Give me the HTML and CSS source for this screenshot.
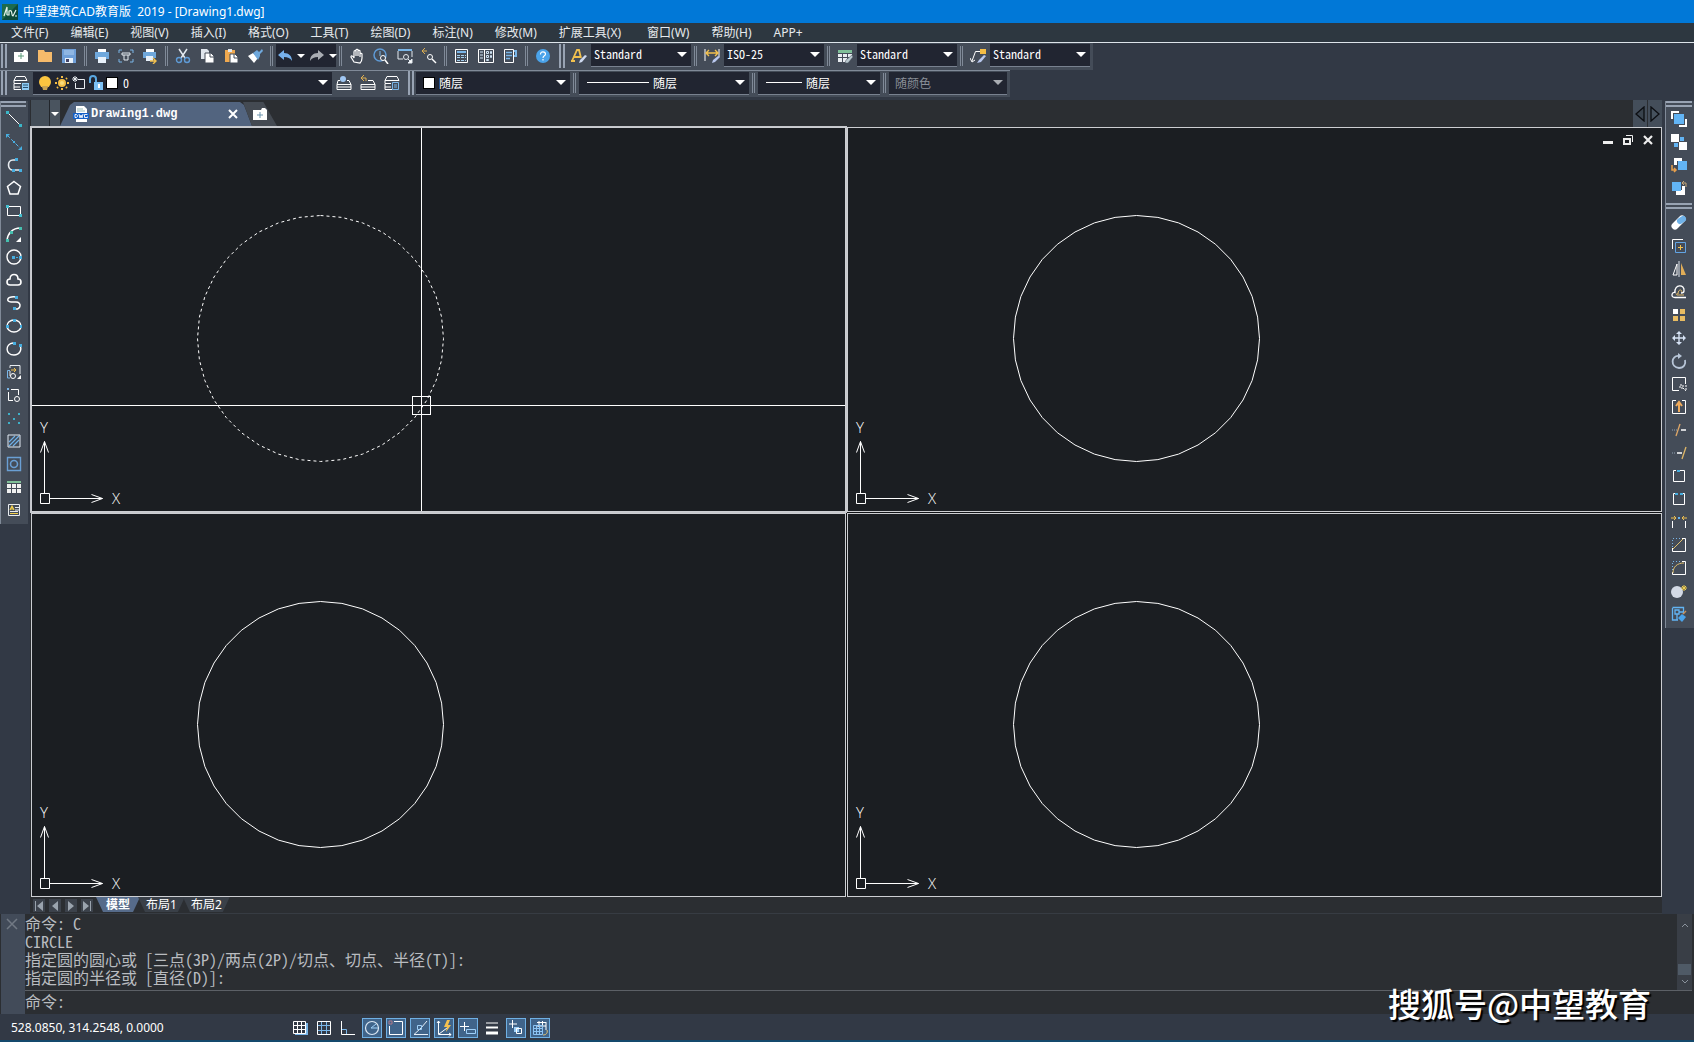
FILE: index.html
```html
<!DOCTYPE html>
<html lang="zh-CN">
<head>
<meta charset="utf-8">
<title>中望建筑CAD教育版 2019 - [Drawing1.dwg]</title>
<link rel="stylesheet" href="styles.css">
</head>
<body>
<header class="titlebar">
  <svg class="logo" viewBox="0 0 16 16"><rect width="16" height="16" fill="#0d4a3a"/><path d="M0 0h16L0 16z" fill="#1d6b4c"/><path d="M2 12 5 3v8M5 11h2V7c4-2 2 5 4 5l3-6M13 12h2" fill="none" stroke="#e8f4ee" stroke-width="1.200"/></svg>
  <h1>中望建筑CAD教育版&nbsp; 2019 - [Drawing1.dwg]</h1>
</header>
<nav class="menu">
  <button>文件(F)</button><button>编辑(E)</button><button>视图(V)</button><button>插入(I)</button><button>格式(O)</button><button>工具(T)</button><button>绘图(D)</button><button>标注(N)</button><button>修改(M)</button><button class="wide">扩展工具(X)</button><button>窗口(W)</button><button>帮助(H)</button><button>APP+</button>
</nav>

<div class="toolrow">
  <div class="bar">
    <i class="grip"></i>
    <button class="tb" aria-label="新建"><svg viewBox="0 0 16 16"><path d="M1 4h9l1-2h2l2 2v10H1z" fill="#fff"/><path d="M8 5v6M5 8h6" stroke="#5a9a78"/></svg></button>
    <button class="tb" aria-label="打开"><svg viewBox="0 0 16 16"><path d="M1 2h6l1 2h7v10H1z" fill="#f6bb6b"/></svg></button>
    <button class="tb" aria-label="保存"><svg viewBox="0 0 16 16"><path d="M1 1h14v14H1z" fill="#6f9fd8"/><path d="M3 2h10v5H3z" fill="#8fb6e2"/><path d="M4 10h8v5H4z" fill="#e8f1fa"/><path d="M5 11h3v3H5z" fill="#446"/></svg></button>
    <i class="sep"></i>
    <button class="tb" aria-label="打印"><svg viewBox="0 0 16 16"><path d="M4 1h8v3H4z" fill="#fff"/><path d="M1 4h14v7H1z" fill="#6fa8dc"/><path d="M4 9h8v6H4z" fill="#e8f1fa"/></svg></button>
    <button class="tb" aria-label="打印预览"><svg viewBox="0 0 16 16" fill="none" stroke="#7ab6e8"><path d="M1 5V2h3M12 2h3v3M1 11v3h3M12 14h3v-3"/><path d="M4 5h8v2H4zM6 7v5h4V7" stroke="#e4eaf0"/></svg></button>
    <button class="tb" aria-label="发布"><svg viewBox="0 0 16 16"><path d="M4 1h8v3H4z" fill="#fff"/><path d="M1 4h13v6H1z" fill="#6fa8dc"/><path d="M4 8h7v5H4z" fill="#e8f1fa"/><path d="M8 13h6m-3-3 3 3-3 3" stroke="#f2c14e" stroke-width="1.4" fill="none"/></svg></button>
    <i class="sep"></i>
    <button class="tb" aria-label="剪切"><svg viewBox="0 0 16 16" fill="none"><path d="m4 1 6 9M12 1 6 10" stroke="#e4eaf0" stroke-width="1.5"/><circle cx="4" cy="12" r="2.5" stroke="#5f9bd6" stroke-width="1.4"/><circle cx="12" cy="12" r="2.5" stroke="#5f9bd6" stroke-width="1.4"/></svg></button>
    <button class="tb" aria-label="复制"><svg viewBox="0 0 16 16"><path d="M2 1h6l2 2v8H2z" fill="#dfe5ec"/><path d="M6 5h6l3 3v7H6z" fill="#fff" stroke="#444c59"/><path d="M11 5v4h4" fill="none" stroke="#444c59"/></svg></button>
    <button class="tb" aria-label="粘贴"><svg viewBox="0 0 16 16"><path d="M2 2h10v12H2z" fill="#f0a94f"/><path d="M5 1h4v3H5z" fill="#dfe5ec"/><path d="M7 6h5l3 3v6H7z" fill="#fff" stroke="#444c59"/><path d="M11 6v4h4" fill="none" stroke="#444c59"/></svg></button>
    <button class="tb" aria-label="特性匹配"><svg viewBox="0 0 16 16"><path d="m1 8 5-3 5 5-4 5z" fill="#fff"/><path d="m6 5 4-3 2 2 3-3 1 2-3 3v2l-2 4z" fill="#6fa8dc"/></svg></button>
    <i class="sep"></i>
    <span class="undo">
      <button aria-label="放弃"><svg viewBox="0 0 16 16"><path d="m1 7 6-5v3c5 0 8 3 8 8-2-3-4-4-8-4v3z" fill="#76b0ec"/></svg></button><b class="tri"></b>
      <button aria-label="重做"><svg viewBox="0 0 16 16"><path d="M15 7 9 2v3c-5 0-8 3-8 8 2-3 4-4 8-4v3z" fill="#a9adb3"/></svg></button><b class="tri"></b>
    </span>
    <i class="sep"></i>
    <button class="tb" aria-label="平移"><svg viewBox="0 0 16 16" fill="none" stroke="#fff" stroke-width="1.2"><path d="M5 14 2 9c0-2 2-1 3 1V4c0-2 2-2 2 0v4-6c0-1 2-1 2 0v6-5c0-1 2-1 2 0v6-3c0-1 2-1 2 0v4c0 3-1 4-2 5z"/></svg></button>
    <button class="tb" aria-label="实时缩放"><svg viewBox="0 0 16 16" fill="none"><circle cx="7" cy="7" r="6" stroke="#5f9bd6" stroke-width="1.5"/><path d="M7 3v5" stroke="#7ab6e8"/><circle cx="10" cy="10" r="2.5" stroke="#fff" fill="#444c59"/><path d="m12 12 3 4" stroke="#fff" stroke-width="1.5"/></svg></button>
    <button class="tb" aria-label="窗口缩放"><svg viewBox="0 0 16 16" fill="none" stroke="#e4eaf0"><path d="M1 2h14" stroke="#7ab6e8" stroke-width="2"/><path d="M1 3v8h5M15 3v6"/><circle cx="9" cy="9" r="2.5"/><path d="m11 11 2 2"/><path d="M15 11v4h-4z" fill="#fff"/></svg></button>
    <button class="tb" aria-label="上一个缩放"><svg viewBox="0 0 16 16" fill="none"><path d="M6 3H1m3-3L1 3l3 3" stroke="#e0b050"/><circle cx="9" cy="9" r="2.500" stroke="#fff"/><path d="m11 11 4 4" stroke="#fff" stroke-width="1.4"/></svg></button>
    <i class="sep"></i>
    <button class="tb" aria-label="特性"><svg viewBox="0 0 16 16" fill="none"><path d="M1.500 1.500h12v13h-12z" stroke="#fff"/><path d="M3 4h9" stroke="#7ab6e8" stroke-width="2"/><path d="M3 7.500h9M3 9.500h9M3 12.500h9" stroke="#a6d0ee" stroke-dasharray="3 1"/></svg></button>
    <button class="tb" aria-label="设计中心"><svg viewBox="0 0 16 16" fill="none" stroke="#fff"><path d="M.500 1.500h15v13H.500zM6.500 1v14"/><path d="M2 4h3M2 7h3M2 10h3M8.500 3.500h2v2h-2zM12.500 3.500h1v2h-1zM8.500 7.500h2v2h-2zM12.500 7.500h1v2h-1zM8.500 11.500h2v1h-2z" stroke="#cfe2f2"/></svg></button>
    <button class="tb" aria-label="工具选项板"><svg viewBox="0 0 16 16" fill="none"><path d="M2.500 1.500h9v13h-9z" stroke="#fff"/><path d="M12 3h2v5h-2" stroke="#7ab6e8" stroke-width="2"/><path d="M4 4.500h6M4 7.500h6M4 10.500h4" stroke="#7ab6e8" stroke-width="1.500"/></svg></button>
    <i class="sep"></i>
    <button class="tb" aria-label="帮助"><svg viewBox="0 0 16 16"><circle cx="8" cy="8" r="7" fill="#4aa3ea"/><path d="M5.500 6.500c0-4 5-3 5-.5 0 2-2.500 1.500-2.500 4M8 11v1.500" fill="none" stroke="#fff" stroke-width="1.200"/></svg></button>
  </div>
  <div class="bar styles">
    <i class="grip"></i>
    <button class="tb" aria-label="文字样式"><svg viewBox="0 0 16 16" fill="none"><path d="m1 13 5-11h2l2 8M3 9h6M0 13h4" stroke="#f2c14e" stroke-width="1.8"/><path d="m8 15 1-3 5-5 2 1-5 6z" fill="#cdd8ee"/></svg></button>
    <span class="combo"><select aria-label="文字样式"><option>Standard</option></select></span>
    <i class="sep"></i>
    <button class="tb" aria-label="标注样式"><svg viewBox="0 0 16 16" fill="none"><path d="M1 1v12M15 1v8" stroke="#fff"/><path d="M2 5h12M5 2 2 5l3 3M11 2l3 3-3 3" stroke="#f2c14e" stroke-width="1.400"/><path d="m8 15 1-3 5-4 2 1-5 5z" fill="#b9c8ee"/></svg></button>
    <span class="combo"><select aria-label="标注样式"><option>ISO-25</option></select></span>
    <i class="sep"></i>
    <button class="tb" aria-label="表格样式"><svg viewBox="0 0 16 16"><path d="M1 2h14v3H1z" fill="#7fbf98"/><path d="M1 6h4v3H1zM6 6h4v3H6zM11 6h4v3h-4zM1 10h4v4H1zM6 10h4v4H6z" fill="#e8ecf0"/><path d="m8 15 1-3 6-5 1 2-5 6z" fill="#b9c8ce" stroke="#444c59" stroke-width=".5"/></svg></button>
    <span class="combo"><select aria-label="表格样式"><option>Standard</option></select></span>
    <i class="sep"></i>
    <button class="tb" aria-label="多重引线样式"><svg viewBox="0 0 16 16" fill="none"><path d="M10 3.500H5.500L2 13M0 10l2 4 3-2" stroke="#fff"/><path d="M10 1h6v5h-6z" fill="#f4bd45"/><path d="m7 15 2-3 5-5 2 1-5 6z" fill="#b9c8ee"/></svg></button>
    <span class="combo"><select aria-label="多重引线样式"><option>Standard</option></select></span>
  </div>
</div>

<div class="toolrow second">
  <div class="bar">
    <i class="grip"></i>
    <button class="tb" aria-label="图层特性"><svg viewBox="0 0 16 16" fill="none" stroke="#fff"><path d="M3 1.500h9l2 4H1zM1 5.500v3h7M1 9v3h6M1 12v2.500h7"/><path d="M9 8h7v7H9z" fill="#8ecbf4" stroke="none"/><path d="M10 10h5M10 12.500h5" stroke="#28506e"/></svg></button>
    <span class="combo layer">
      <svg viewBox="0 0 16 16"><circle cx="8" cy="7" r="6" fill="#fbc540"/><path d="M5 11h6l-1 4H6z" fill="#c9a452"/></svg>
      <svg viewBox="0 0 16 16" fill="none" stroke="#f4bd45" stroke-width="2"><circle cx="8" cy="8" r="3" fill="#f9dc7c"/><path d="M8 1v2M8 13v2M1 8h2M13 8h2M3 3l1 1M12 12l1 1M13 3l-1 1M4 12l-1 1"/></svg>
      <svg viewBox="0 0 16 16" fill="none" stroke="#e8ecf0"><path d="M7 4.500h6.500v9h-9V8M4 1v6M1 4h6M2 2l4 4M6 2 2 6"/></svg>
      <svg viewBox="0 0 16 16"><path d="M2 8V4c0-4 6-4 6 0v4" fill="none" stroke="#5aa7e0" stroke-width="2"/><path d="M6 7h9v8H6z" fill="#7cc0f4"/><path d="M10 9h2v4h-2z" fill="#fff"/></svg>
      <i class="swatch"></i>
      <select aria-label="图层"><option>0</option></select>
    </span>
    <button class="tb" aria-label="将对象的图层置为当前"><svg viewBox="0 0 16 16" fill="none" stroke="#fff"><path d="M4 5.500H2l-1 4v5h14v-5l-2-4h-2M1 9.500h14M1 12h14"/><circle cx="7" cy="4" r="3" fill="#9fc6f2" stroke="none"/></svg></button>
    <button class="tb" aria-label="上一个图层"><svg viewBox="0 0 16 16" fill="none" stroke="#fff"><path d="M8 5.500h5l2 4v5H1v-5M1 9.500h14M1 12h14"/><path d="M6 6V3H1m3-3L1 3l3 3" stroke="#e0b050"/></svg></button>
    <button class="tb" aria-label="图层状态"><svg viewBox="0 0 16 16" fill="none" stroke="#fff"><path d="M3 1.500h10l2 4H1zM1 5.500v3h6M1 9v3h6M1 12v2.500h7"/><path d="M8.500 7.500h6v7h-6zM10 10h3M10 12h3" stroke="#7ab6e8"/></svg></button>
  </div>
  <div class="bar props">
    <i class="grip"></i>
    <span class="combo color"><i class="swatch"></i><select aria-label="颜色"><option>随层</option></select></span>
    <i class="sep"></i>
    <span class="combo ltype"><i class="line"></i><select aria-label="线型"><option>随层</option></select></span>
    <i class="sep"></i>
    <span class="combo lweight"><i class="line"></i><select aria-label="线宽"><option>随层</option></select></span>
    <i class="sep"></i>
    <span class="combo plot"><select aria-label="打印样式" disabled><option>随颜色</option></select></span>
  </div>
</div>

<main>
  <aside class="side left">
    <div class="vbar">
      <i class="hgrip"></i>
      <button aria-label="直线"><svg viewBox="0 0 16 16"><path d="m2 2 12 12" stroke="#fff"/><path d="M0 0h3v3H0zM13 13h3v3h-3z" fill="#3bb6c8"/></svg></button>
      <button aria-label="构造线"><svg viewBox="0 0 16 16"><path d="m1 1 14 14" stroke="#58b4e8" stroke-dasharray="4 2"/><path d="M0 0h4L0 4zM16 16h-4l4-4zM7 7h2v2H7z" fill="#46aee0"/></svg></button>
      <button aria-label="多段线"><svg viewBox="0 0 16 16"><path d="M10 3H7c-6 0-6 10 0 10h7" fill="none" stroke="#e8ecf0" stroke-width="1.600"/><path d="M9 1h3v3H9zM6 12h3v3H6zM13 12h3v3h-3z" fill="#46aee0"/></svg></button>
      <button aria-label="正多边形"><svg viewBox="0 0 16 16"><path d="m8 1.500 6.500 5L12 14H4L1.500 6.500z" fill="none" stroke="#fff" stroke-width="1.500"/></svg></button>
      <button aria-label="矩形"><svg viewBox="0 0 16 16"><path d="M1.500 3.500h13v9h-13z" fill="none" stroke="#fff"/><path d="M0 2h3v3H0zM13 11h3v3h-3z" fill="#46c0d0"/></svg></button>
      <button aria-label="圆弧"><svg viewBox="0 0 16 16"><path d="M1 14C2 7 7 2 14 2" fill="none" stroke="#fff" stroke-width="1.500"/><path d="M0 13h3v3H0zM4 5h3v3H4zM13 1h3v3h-3z" fill="#46c0b0"/><path d="M15 11v5h-5z" fill="#fff"/></svg></button>
      <button aria-label="圆"><svg viewBox="0 0 16 16"><circle cx="8" cy="8" r="7" fill="none" stroke="#fff" stroke-width="1.400"/><path d="M6 7h3v3H6zM10 8h2v1h-2zM13 7h3v3h-3z" fill="#46aee0"/></svg></button>
      <button aria-label="修订云线"><svg viewBox="0 0 16 16"><path d="M4 13c-4 0-4-6 0-6 0-6 8-6 8 0 4 0 4 6 0 6z" fill="none" stroke="#fff" stroke-width="1.600"/></svg></button>
      <button aria-label="样条曲线"><svg viewBox="0 0 16 16"><path d="M10 2C0 1 0 7 5 7h5c6 0 5 8-1 7" fill="none" stroke="#fff" stroke-width="1.500"/><path d="M9 1h3v3H9zM7 12h3v3H7z" fill="#46aee0"/></svg></button>
      <button aria-label="椭圆"><svg viewBox="0 0 16 16"><ellipse cx="8" cy="8" rx="7" ry="6" fill="none" stroke="#fff" stroke-width="1.400"/><path d="M0 7h3v3H0zM7 1h3v3H7zM14 7h2v3h-2z" fill="#46aee0"/></svg></button>
      <button aria-label="椭圆弧"><svg viewBox="0 0 16 16"><path d="M7 2C-1 3-1 14 8 14c6 0 8-6 6-9" fill="none" stroke="#fff" stroke-width="1.400"/><path d="M7 1h3v3H7zM13 3h3v3h-3z" fill="#46aee0"/></svg></button>
      <button aria-label="插入块"><svg viewBox="0 0 16 16" fill="none"><path d="M4 4V1.500h10V10M4 7v5" stroke="#e8ecf0"/><path d="M4 6.500H1.500V14H4" stroke="#7ab6e8"/><path d="M5 6h5M8 4l2 2-2 2" stroke="#f2c14e"/><circle cx="7" cy="12" r="2.500" stroke="#fff"/><path d="M15 11v4h-4z" fill="#fff"/></svg></button>
      <button aria-label="创建块"><svg viewBox="0 0 16 16" fill="none"><path d="M5 2.500h7.500V8M2.500 5v8.500H7" stroke="#fff"/><path d="M1 1h2v2H1z" fill="#7ab6e8"/><circle cx="11" cy="12" r="2.500" stroke="#fff"/></svg></button>
      <button aria-label="点"><svg viewBox="0 0 16 16"><path d="M2 3h2v2H2zM12 3h2v2h-2zM7 8h2v2H7zM2 12h2v2H2zM12 12h2v2h-2z" fill="#3fb0c8"/></svg></button>
      <button aria-label="图案填充"><svg viewBox="0 0 16 16" fill="none"><path d="m3 9 6-6M3 13 13 3M7 13l6-6" stroke="#6fb0e8" stroke-width="1.200"/><path d="M2 2h12v12H2z" stroke="#dfe8f2"/></svg></button>
      <button aria-label="面域"><svg viewBox="0 0 16 16" fill="none" stroke="#6a9fd4"><path d="M1.500 1.500h13v13h-13z" stroke-width="1.400"/><circle cx="8" cy="8" r="3.500" stroke-width="1.600"/></svg></button>
      <button aria-label="表格"><svg viewBox="0 0 16 16"><path d="M1 2h14v2H1z" fill="#7fbf98"/><path d="M1 5h4v4H1zM6 5h4v4H6zM11 5h4v4h-4zM1 10h4v4H1zM6 10h4v4H6zM11 10h4v4h-4z" fill="#f0f0f0"/></svg></button>
      <button aria-label="多行文字"><svg viewBox="0 0 16 16" fill="none"><path d="M2.500 2.500h11v11h-11z" stroke="#e8ecf0"/><path d="m4 8 2-4 2 4M5 7h3M4 11.500h8" stroke="#f2d04e" stroke-width="1.200"/><path d="M9 5.500h4M9 8h4M4 9.500h8" stroke="#e8ecf0"/></svg></button>
    </div>
  </aside>

  <section class="workspace">
    <div class="filetabs">
      <span class="stub"></span><button class="tablist" aria-label="文件列表"><b class="tri"></b></button>
      <div class="filetab">
        <svg viewBox="0 0 16 16"><path d="M3 0h8l3 3v6H3z" fill="#fff"/><path d="M4 3h6M4 5h8" stroke="#9bb"/><path d="M0 7h16v6H0z" fill="#1461c8"/><path d="M2 8.500v3h1c2 0 2-3 0-3zM6 8l1 4 1-3 1 3 1-4M14.500 8.500h-3v3h3v-1" fill="none" stroke="#fff" stroke-width=".9"/><path d="M3 13h11v3H3z" fill="#fff"/></svg>
        <span>Drawing1.dwg</span><button aria-label="关闭"><svg viewBox="0 0 16 16"><path d="m4 4 8 8M12 4l-8 8" stroke="#fff" stroke-width="2"/></svg></button>
      </div>
      <button class="newtab" aria-label="新建图形"><svg viewBox="0 0 16 16"><path d="M1 4h8l1-2h3l2 2v10H1z" fill="#fff"/><path d="M8 6v6M5 9h6" stroke="#6a93ad"/></svg></button>
      <div class="scrolltabs"><button aria-label="向左"><svg viewBox="0 0 14 16"><path d="M11 1v14L3 8z" fill="#39434d" stroke="#0c0e12" stroke-width="1.300"/></svg></button><button aria-label="向右"><svg viewBox="0 0 14 16"><path d="M3 1v14l8-7z" fill="#46525e" stroke="#0c0e12" stroke-width="1.300"/></svg></button></div>
    </div>

    <svg class="defs" width="0" height="0"><defs>
      <polygon id="round" points="288.500,87.500 309.900,89.400 330.600,94.900 350,104 367.600,116.300 382.700,131.400 395,149 404.100,168.400 409.600,189.100 411.500,210.500 409.600,231.900 404.100,252.600 395,272 382.700,289.600 367.600,304.700 350,317 330.600,326.100 309.900,331.600 288.500,333.500 267.100,331.600 246.400,326.100 227,317 209.400,304.700 194.300,289.600 182,272 172.900,252.600 167.400,231.900 165.500,210.500 167.400,189.100 172.900,168.400 182,149 194.300,131.400 209.400,116.300 227,104 246.400,94.900 267.100,89.400"/>
      <g id="ucs"><path d="M8.500 12.500h9v10h-9zM12.500 12.500v-52M8.500-28.500l4-11 4 11M17.500 17.500h53M59.500 13.500l11 4-11 4"/><text x="8" y="-48">Y</text><text x="80" y="23">X</text></g>
    </defs></svg>
    <div class="canvas">
      <div class="view active">
        <svg class="draw"><use href="#round" stroke-dasharray="3 3"/><path class="crisp" d="M389.500 0v2000M0 277.500h4000M380.500 268.500h18v18h-18z"/></svg>
        <svg class="axes" viewBox="0 -64 100 94"><use href="#ucs"/></svg>
      </div>
      <div class="view">
        <svg class="draw"><use href="#round"/></svg>
        <svg class="axes" viewBox="0 -64 100 94"><use href="#ucs"/></svg>
        <div class="wincontrols">
          <button aria-label="最小化"><svg viewBox="0 0 12 12"><path d="M1 8.500h10" stroke="#eee" stroke-width="3"/></svg></button>
          <button aria-label="还原"><svg viewBox="0 0 12 12" fill="none" stroke="#eee"><path d="M2 5h6v5H2z" stroke-width="2"/><path d="M4 1.500h6.500V8"/></svg></button>
          <button aria-label="关闭"><svg viewBox="0 0 12 12"><path d="m2 2 8 8M10 2l-8 8" stroke="#eee" stroke-width="2.200"/></svg></button>
        </div>
      </div>
      <div class="view">
        <svg class="draw"><use href="#round"/></svg>
        <svg class="axes" viewBox="0 -64 100 94"><use href="#ucs"/></svg>
      </div>
      <div class="view">
        <svg class="draw"><use href="#round"/></svg>
        <svg class="axes" viewBox="0 -64 100 94"><use href="#ucs"/></svg>
      </div>
    </div>

    <div class="layouts">
      <div class="nav">
        <button aria-label="第一个"><svg viewBox="0 0 12 12"><path d="M2 1h1v10H2zM10 1v10L4 6z" fill="#9aa3ad"/></svg></button>
        <button aria-label="上一个"><svg viewBox="0 0 12 12"><path d="M9 1v10L3 6z" fill="#9aa3ad"/></svg></button>
        <button aria-label="下一个"><svg viewBox="0 0 12 12"><path d="M3 1v10l6-5z" fill="#9aa3ad"/></svg></button>
        <button aria-label="最后一个"><svg viewBox="0 0 12 12"><path d="M9 1h1v10H9zM2 1v10l6-5z" fill="#9aa3ad"/></svg></button>
      </div>
      <button class="ltab on">模型</button><button class="ltab">布局1</button><button class="ltab">布局2</button>
    </div>
  </section>

  <aside class="side right">
    <div class="vbar">
      <i class="hgrip"></i>
      <button aria-label="前置"><svg viewBox="0 0 16 16"><path d="M1 8V1h7M15 8v7H8" fill="none" stroke="#fff" stroke-width="2"/><path d="M3 3h10v10H3z" fill="#62b4f4"/></svg></button>
      <button aria-label="后置"><svg viewBox="0 0 16 16"><path d="M0 0h8v8H0zM8 8h8v8H8z" fill="#fff"/><path d="M9 3h4v4H9zM3 9h4v4H3z" fill="#62b4f4"/></svg></button>
      <button aria-label="置于对象之上"><svg viewBox="0 0 16 16"><path d="M3 1h8v3H6v4H3z" fill="#fff"/><path d="M7 4h9v9H7z" fill="#62b4f4"/><path d="M1 8v5h4M3 11l2 2-2 2" fill="none" stroke="#e8a04c" stroke-width="1.500"/></svg></button>
      <button aria-label="置于对象之下"><svg viewBox="0 0 16 16"><path d="M5 10h6V6h3v9H5z" fill="#fff"/><path d="M1 2h9v9H1z" fill="#62b4f4"/><path d="M15 7V3h-4M13 1l-2 2 2 2" fill="none" stroke="#c8a878"/></svg></button>
      <i class="hgrip gap"></i>
      <button aria-label="删除"><svg viewBox="0 0 16 16"><path d="m4 11 7-7" stroke="#fff" stroke-width="7" stroke-linecap="round"/><path d="m9 6 3-2" stroke="#6fb2e8" stroke-width="6" stroke-linecap="round"/></svg></button>
      <button aria-label="复制对象"><svg viewBox="0 0 16 16" fill="none"><path d="M1.500 11V1.500H12" stroke="#fff"/><path d="M4.500 4.500h10v10h-10z" stroke="#62a4e4"/><path d="M9.500 7v5M7 9.500h5" stroke="#f2c14e"/></svg></button>
      <button aria-label="镜像"><svg viewBox="0 0 16 16"><path d="M6 3v11H2z" fill="none" stroke="#fff"/><path d="M8 0v16" stroke="#dfe5ec"/><path d="M10 2v12h5z" fill="#e0ad58"/></svg></button>
      <button aria-label="偏移"><svg viewBox="0 0 16 16" fill="none"><path d="M15 13.500H4c-5 0-3-6 0-5C3 0 14 0 13 7c0 2-2 2-3 2" stroke="#fff" stroke-width="1.300"/><path d="M13 11H6c-1 0-1-2 1-1 0-5 4-5 4-2" stroke="#e0b96a"/></svg></button>
      <button aria-label="阵列"><svg viewBox="0 0 16 16"><path d="M2 2h5v5H2z" fill="#fff"/><path d="M9 2h5v5H9zM2 9h5v5H2zM9 9h5v5H9z" fill="#e8bc62"/></svg></button>
      <button aria-label="移动"><svg viewBox="0 0 16 16"><path d="M8 2v12M2 8h12" stroke="#d5e2f4" stroke-width="1.400"/><path d="m8 1 3 3H5zM8 15l3-3H5zM1 8l3-3v6zM15 8l-3-3v6z" fill="#d5e2f4"/></svg></button>
      <button aria-label="旋转"><svg viewBox="0 0 16 16"><path d="M8 3C0 2-1 14 8 15c5 0 7-4 6-8" fill="none" stroke="#b8c6d8" stroke-width="1.800"/><path d="M7 0v6l4-3z" fill="#b8c6d8"/></svg></button>
      <button aria-label="缩放"><svg viewBox="0 0 16 16" fill="none" stroke="#fff"><path d="M8 14.500H1.500v-13h13V8"/><path d="M9 9h3v3H9zM12 12l3 3M15 9v6" stroke-dasharray="2 1"/></svg></button>
      <button aria-label="拉伸"><svg viewBox="0 0 16 16" fill="none"><path d="M5 1.500H1.500v13h13v-13H11" stroke="#fff"/><path d="M8 3v10M5 7l3-4 3 4" stroke="#f0ab5c" stroke-width="2"/></svg></button>
      <button aria-label="修剪"><svg viewBox="0 0 16 16"><path d="M10 8h5" stroke="#fff" stroke-width="1.500"/><path d="M1 8h5" stroke="#8fa0b0" stroke-dasharray="1 1"/><path d="M9 2 5 14" stroke="#e0a868" stroke-width="1.300"/></svg></button>
      <button aria-label="延伸"><svg viewBox="0 0 16 16"><path d="M6 8h5" stroke="#fff" stroke-width="1.500"/><path d="M1 8h4" stroke="#8fa0b0" stroke-dasharray="1 1"/><path d="m15 2-4 12" stroke="#e0b868" stroke-width="1.300"/></svg></button>
      <button aria-label="打断于点"><svg viewBox="0 0 16 16" fill="none"><path d="M5 2.500H2.500v11h11v-11H9" stroke="#fff"/><path d="M6 2h3v2H6z" fill="#46aee0"/></svg></button>
      <button aria-label="打断"><svg viewBox="0 0 16 16" fill="none"><path d="M4 2.500H2.500v11h11v-11H12" stroke="#fff"/><path d="M4 2h3v2H4zM9 2h3v2H9z" fill="#46aee0"/></svg></button>
      <button aria-label="合并"><svg viewBox="0 0 16 16" fill="none"><path d="M1.500 14V7M14.500 14V7" stroke="#fff"/><path d="M0 4h5M3 2l2 2-2 2M16 4h-5M13 2l-2 2 2 2" stroke="#f2c14e"/><path d="M7 3h2v2H7z" fill="#62b4f4"/></svg></button>
      <button aria-label="倒角"><svg viewBox="0 0 16 16" fill="none"><path d="M11 1.500h3.500v13h-13V11" stroke="#fff"/><path d="M1.500 10V1.500H10" stroke="#7ab6e8" stroke-dasharray="1 2"/><path d="M2 12 12 2" stroke="#e0c070"/></svg></button>
      <button aria-label="圆角"><svg viewBox="0 0 16 16" fill="none"><path d="M11 1.500h3.500v13h-13V12" stroke="#fff"/><path d="M1.500 10V1.500H10" stroke="#7ab6e8" stroke-dasharray="1 2"/><path d="M2 13C2 7 6 3 13 3" stroke="#e0c070"/></svg></button>
      <button aria-label="分解"><svg viewBox="0 0 16 16"><circle cx="6" cy="9" r="6" fill="#d3dae6"/><path d="M13 2v6M10 5h6M11 3l4 4M15 3l-4 4" stroke="#f2d04e"/></svg></button>
      <button aria-label="块编辑"><svg viewBox="0 0 16 16" fill="none" stroke="#62b4f4"><path d="M1.500 1.500h11V8M1.500 2v12H7M4 4h4v4H4zM6 8v6M8 6h5" stroke-width="1.300"/><path d="m7 12 4-4 4 3-4 5z" fill="#4aa3ea" stroke="none"/><path d="m12 8 3-3" stroke="#c89058" stroke-width="1.500"/></svg></button>
    </div>
  </aside>
</main>

<section class="command">
  <div class="cmdgrip"><button aria-label="关闭命令行"><svg viewBox="0 0 12 12"><path d="m1 1 10 10M11 1 1 11" stroke="#717984" stroke-width="1.500"/></svg></button></div>
  <div class="cmdbody">
    <div class="history">
      <div class="log"><p>命令: C</p><p>CIRCLE</p><p>指定圆的圆心或 [三点(3P)/两点(2P)/切点、切点、半径(T)]:</p><p>指定圆的半径或 [直径(D)]:</p></div>
      <div class="scroll"><svg viewBox="0 0 12 8"><path d="m3 6 3-3 3 3" fill="none" stroke="#8a929c"/></svg><i></i><svg viewBox="0 0 12 8"><path d="m3 2 3 3 3-3" fill="none" stroke="#8a929c"/></svg></div>
    </div>
    <div class="prompt"><label for="cmd">命令:</label><input id="cmd" type="text"></div>
  </div>
  <p class="mark">搜狐号@中望教育</p>
</section>

<footer class="status">
  <span class="coords">528.0850, 314.2548, 0.0000</span>
  <button aria-label="捕捉"><svg viewBox="0 0 20 20"><path d="M5 16h12V5" fill="none" stroke="#7ab6e8" stroke-width="2"/><path d="M3.500 3.500h12v12h-12zM7.500 3v13M11.500 3v13M3 7.500h13M3 11.500h13" fill="none" stroke="#fff"/></svg></button>
  <button aria-label="栅格"><svg viewBox="0 0 20 20"><path d="M3.500 3.500h13v13h-13z" fill="none" stroke="#fff"/><path d="M7.500 4v12M12.500 4v12M4 7.500h12M4 12.500h12" stroke="#7ab6e8"/></svg></button>
  <button aria-label="正交"><svg viewBox="0 0 20 20" fill="none"><path d="M4 11.500h4.500V16" stroke="#7ab6e8"/><path d="M3.500 3v13.500H17" stroke="#fff"/></svg></button>
  <button class="on" aria-label="极轴"><svg viewBox="0 0 20 20" fill="none"><circle cx="10" cy="10" r="6.500" stroke="#dce8f4" stroke-width="1.200"/><path d="M9 10h7M9 10l5-4" stroke="#9fd0f8"/></svg></button>
  <button class="on" aria-label="对象捕捉"><svg viewBox="0 0 20 20" fill="none"><path d="M8 3.500h8.500v13h-13V8" stroke="#fff"/><path d="M3 3h3v3H3z" stroke="#b07888"/></svg></button>
  <button class="on" aria-label="对象追踪"><svg viewBox="0 0 20 20" fill="none"><path d="m17 3-6 7-7 6.500h14" stroke="#e8f0f8"/><path d="M7.500 7.500h4v4h-4z" stroke="#9fd0f8"/></svg></button>
  <button class="on" aria-label="动态UCS"><svg viewBox="0 0 20 20" fill="none"><path d="M4.500 3v13.500H17M5 16l8-6M3 5l1.500-2L6 5M15 15l2 1.500-2 2" stroke="#fff"/><path d="m13 2-3 7h3l-1 5 5-7h-3l2-5z" fill="#f4c04e"/></svg></button>
  <button class="on" aria-label="动态输入"><svg viewBox="0 0 20 20" fill="none"><path d="M6.500 4v9M2 8.500h9" stroke="#fff"/><path d="M8.500 11.500h9v4h-9z" stroke="#9fd0f8"/></svg></button>
  <button aria-label="线宽"><svg viewBox="0 0 20 20"><path d="M4 5h12" stroke="#fff"/><path d="M4 9.500h12" stroke="#fff" stroke-width="2"/><path d="M4 15h12" stroke="#fff" stroke-width="3"/></svg></button>
  <button class="on" aria-label="循环选择"><svg viewBox="0 0 20 20" fill="none"><path d="M6.500 2v8M3 6h8" stroke="#fff"/><path d="M8 9h5v5H8z" fill="#9fd0f8"/><path d="M10.500 10.500h5v5h-5z" stroke="#fff"/></svg></button>
  <button class="on" aria-label="注释比例"><svg viewBox="0 0 20 20" fill="none"><path d="M7 4.500h9M16 4v8M9 3v6M12.500 3v8M7 8h9" stroke="#fff"/><path d="M3.500 7.500h9v9h-9zM6.500 8v8M9.500 8v8M3 10.500h10M3 13.500h10" stroke="#8cc4f4"/><path d="M17 12c1 3-1 5-4 5" stroke="#e0c070"/></svg></button>
</footer>
</body>
</html>
```
FILE: styles.css
```css
* { box-sizing: border-box; }
:root {
  --slate: #323945;
  --panel: #444c58;
  --field: #212531;
  --dark: #2b2e32;
  --ui: "Noto Sans", "Noto Sans CJK SC", sans-serif;
  --song: "Noto Sans Mono CJK SC", "Liberation Mono", "Noto Sans CJK SC", monospace;
}
body {
  margin: 0;
  min-height: 100vh;
  display: flex;
  flex-direction: column;
  background: var(--slate);
  color: #fff;
  font: 12px/16px var(--ui);
  overflow-x: hidden;
}
button { display: grid; place-items: center; margin: 0; padding: 0; border: 0; background: none; color: inherit; font: inherit; }
svg { display: block; width: 16px; height: 16px; }
p { margin: 0; }

.titlebar { display: flex; align-items: center; gap: 5px; height: 23px; padding-left: 2px; background: #0178d7; }
.titlebar h1 { margin: 0; font: 12px/16px var(--ui); white-space: pre; }
.menu { display: flex; gap: 22px; height: 20px; padding-left: 11px; background: #2d3740; border-bottom: 1px solid #dde4ea; color: #e6eaee; white-space: nowrap; }
.menu .wide { padding-right: 4px; }

/* Toolbars */
.toolrow { display: flex; height: 27px; }
.toolrow.second { border-top: 1px solid #808a98; width: max-content; }
.bar { display: flex; align-items: center; background: var(--panel); padding: 0 3px 2px 0; }
.bar i { flex: none; }
.grip { width: 6px; height: 24px; margin: 0 2px 0 1px; border: solid #98a3b3; border-width: 0 2px; }
.sep { width: 3px; height: 20px; margin: 0 3px; border: solid #808a98; border-width: 0 1px; }
.tb { width: 24px; height: 24px; }
.tri { width: 0; height: 0; border: 4px solid transparent; border-top-color: #fff; border-bottom: 0; }
.undo { display: flex; align-items: center; gap: 4px; width: 60px; height: 23px; padding-left: 1px; background: var(--field); }
.combo { position: relative; display: flex; align-items: center; gap: 1px; width: 100px; height: 23px; background: var(--field); border-bottom: 1px solid #78818f; }
.combo::after { content: ""; position: absolute; right: 4px; top: 8px; border: 5px solid transparent; border-top-color: #fff; border-bottom: 0; pointer-events: none; }
.combo select { flex: 1; min-width: 0; height: 20px; padding: 0 0 0 3px; border: 0; appearance: none; background: none; color: #fff; font: 12px/16px var(--song); }
.styles .combo select { padding-bottom: 3px; }
.combo .swatch { width: 12px; height: 12px; background: #fff; border: 1px solid #000; }
.combo .line { height: 1px; background: #fff; }
.combo.layer { width: 299px; padding-left: 4px; }
.combo.layer .swatch { margin-left: 1px; }
.combo.layer select { padding-left: 4px; }
.combo.color { width: 154px; padding-left: 7px; }
.combo.ltype { width: 170px; padding-left: 8px; }
.combo.ltype .line { width: 62px; }
.combo.lweight { width: 122px; padding-left: 8px; }
.combo.lweight .line { width: 36px; }
.combo.plot { width: 118px; padding-left: 3px; }
.combo.plot select { color: #8a8f98; opacity: 1; }
.combo.plot::after { border-top-color: #a9adb3; }

/* Workspace */
main { flex: 1; display: grid; grid-template-columns: 30px minmax(0, 1fr) 32px; padding-top: 3px; }
.side { padding-top: 1px; }
.vbar { width: 28px; padding-bottom: 3px; background: var(--panel); border-left: 1px solid #808a98; }
.vbar button { width: 26px; height: 23px; }
.right { padding-left: 3px; }
.right .vbar { width: 29px; }
.hgrip { display: block; height: 6px; margin-right: 2px; border: solid #98a3b3; border-width: 2px 0; }
.hgrip.gap { margin: 4px 2px 2px 0; }
.workspace { display: flex; flex-direction: column; background: var(--dark); }
.defs { position: absolute; }
.filetabs { display: flex; height: 27px; padding-left: 1px; }
.stub { width: 19px; background: #444e58; border-right: 1px solid #22262b; }
.tablist { width: 10px; background: #4a545f; }
.filetab { display: flex; align-items: center; gap: 2px; width: 192px; height: 24px; margin-top: 2px; padding-left: 13px; background: #52647f; clip-path: polygon(0 100%, 10px 12%, 14px 0, 180px 0, 184px 12%, 100% 100%); font: bold 12px/16px "Liberation Mono", monospace; }
.filetab button { margin-left: auto; margin-right: 11px; }
.newtab { width: 34px; height: 24px; margin: 2px 0 0 -9px; background: #444a52; clip-path: polygon(0 0, 60% 0, 100% 100%, 9px 100%); }
.scrolltabs { display: flex; gap: 1px; margin-left: auto; }
.scrolltabs button { width: 14px; background: #444e5a; }
.scrolltabs svg { width: 14px; }

.canvas { flex: 1; display: grid; grid-template: 1fr 1fr / 1fr 1fr; gap: 1px; margin-left: 1px; background: #101215; }
.view { position: relative; min-height: 300px; background: #1b1e22; border: 1px solid #ccced2; overflow: hidden; }
.view.active { box-shadow: 0 0 0 1px #c6c8cc; z-index: 1; }
.draw { position: absolute; inset: 0; width: 100%; height: 100%; fill: none; stroke: #fff; }
.crisp { shape-rendering: crispEdges; }
.axes { position: absolute; left: 0; bottom: 0; width: 100px; height: 94px; fill: none; stroke: #fff; }
.defs text { font: 300 15px "Open Sans", sans-serif; fill: #fff; stroke: none; }
.wincontrols { position: absolute; top: 6px; right: 7px; display: flex; gap: 8px; }
.wincontrols svg { width: 12px; height: 12px; }

.layouts { display: flex; height: 17px; padding-left: 3px; border-bottom: 1px solid #373c43; }
.nav { display: flex; gap: 4px; width: 63px; padding-top: 2px; }
.nav button { width: 12px; height: 13px; background: #3c424b; }
.nav svg { width: 12px; height: 12px; }
.ltab { height: 15px; padding: 0 8px; margin-right: -2px; background: #3a4048; clip-path: polygon(0 0, 100% 0, calc(100% - 7px) 100%, 7px 100%); line-height: 14px; }
.ltab.on { padding: 0 10px; background: #566b8a; font-weight: bold; }

/* Command line */
.command { position: relative; display: flex; height: 100px; padding: 0 2px 0 1px; background: var(--dark); }
.cmdgrip { width: 24px; padding: 4px 0 0 5px; background: #424b59; }
.cmdgrip svg { width: 12px; height: 12px; }
.cmdbody { flex: 1; font: 300 16px/18px var(--song); color: #b9bcc0; }
.history { display: flex; justify-content: space-between; height: 77px; border-bottom: 1px solid #5c6066; }
.scroll { display: flex; flex-direction: column; align-items: center; width: 15px; padding: 7px 0 4px; background: #393e46; }
.scroll svg { width: 12px; height: 8px; }
.scroll i { width: 13px; height: 11px; margin: auto 0 3px; background: #4f5a66; }
.prompt { display: flex; height: 20px; align-items: center; }
.prompt input { flex: 1; padding: 0 4px; border: 0; outline: 0; background: none; color: inherit; font: inherit; }
.mark { position: absolute; right: 43px; top: 65px; font: 500 33px/48px "Noto Sans CJK SC", sans-serif; text-shadow: 2px 2px 1px #000; z-index: 1; white-space: nowrap; }

.status { display: flex; align-items: center; gap: 4px; height: 28px; padding: 2px 0 0 11px; border-bottom: 2px solid #14496c; }
.coords { width: 275px; }
.status button { width: 20px; height: 20px; }
.status svg { width: 20px; height: 20px; }
.status .on { background: #40648a; box-shadow: inset 0 0 0 1px #6fb0e4; }
```
